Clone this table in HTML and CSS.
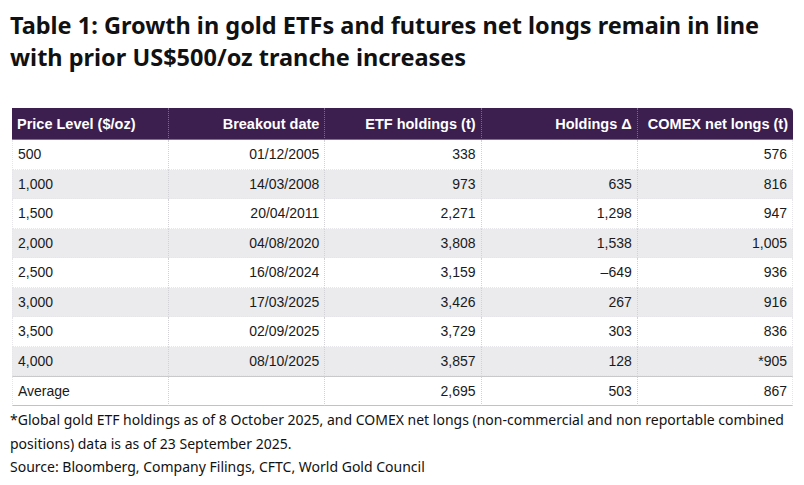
FILE: index.html
```html
<!DOCTYPE html>
<html>
<head>
<meta charset="utf-8">
<link rel="stylesheet" href="styles.css">
</head>
<body>
<h1 class="title">Table 1: Growth in gold ETFs and futures net longs remain in line with prior US$500/oz tranche increases</h1>
<table class="data">
  <thead>
    <tr>
      <th class="left">Price Level ($/oz)</th>
      <th>Breakout date</th>
      <th>ETF holdings (t)</th>
      <th>Holdings Δ</th>
      <th class="last">COMEX net longs (t)</th>
    </tr>
  </thead>
  <tbody>
    <tr><td class="left">500</td><td>01/12/2005</td><td>338</td><td></td><td>576</td></tr>
    <tr class="alt"><td class="left">1,000</td><td>14/03/2008</td><td>973</td><td>635</td><td>816</td></tr>
    <tr><td class="left">1,500</td><td>20/04/2011</td><td>2,271</td><td>1,298</td><td>947</td></tr>
    <tr class="alt"><td class="left">2,000</td><td>04/08/2020</td><td>3,808</td><td>1,538</td><td>1,005</td></tr>
    <tr><td class="left">2,500</td><td>16/08/2024</td><td>3,159</td><td>–649</td><td>936</td></tr>
    <tr class="alt"><td class="left">3,000</td><td>17/03/2025</td><td>3,426</td><td>267</td><td>916</td></tr>
    <tr><td class="left">3,500</td><td>02/09/2025</td><td>3,729</td><td>303</td><td>836</td></tr>
    <tr class="alt"><td class="left">4,000</td><td>08/10/2025</td><td>3,857</td><td>128</td><td>*905</td></tr>
    <tr class="avg"><td class="left">Average</td><td></td><td>2,695</td><td>503</td><td>867</td></tr>
  </tbody>
</table>
<p class="note">*Global gold ETF holdings as of 8 October 2025, and COMEX net longs (non-commercial and non reportable combined positions) data is as of 23 September 2025.</p>
<p class="note">Source: Bloomberg, Company Filings, CFTC, World Gold Council</p>
</body>
</html>
```

FILE: styles.css
```css
html, body {
  margin: 0;
  padding: 0;
  background: #ffffff;
}
body {
  padding: 0 10px;
  color: #111111;
}
.title {
  font-family: "Noto Sans", "Open Sans", sans-serif;
  font-weight: 700;
  font-size: 23.5px;
  line-height: 32px;
  margin: 9px 0 0 0;
  color: #111111;
}
.data {
  margin: 35px 0 0 2px;
  width: 781px;
  table-layout: fixed;
  border-collapse: separate;
  border-spacing: 0;
  font-family: "Liberation Sans", Arial, sans-serif;
  font-size: 14px;
  color: #1a1a1a;
}
.data th {
  background: #3c1f4f;
  color: #ffffff;
  font-weight: 700;
  font-size: 14.5px;
  height: 31px;
  padding: 0 5px;
  text-align: right;
  border-bottom: 1px solid #8a6a9c;
  border-left: 1px dotted #7d6590;
  white-space: nowrap;
}
.data th:first-child {
  border-left: none;
}
.data th.last {
  border-top-right-radius: 4px;
}
.data td {
  height: 28.5px;
  padding: 0 5px;
  text-align: right;
  border-left: 1px dotted #d2d2d6;
  border-bottom: 1px dotted #e6e6ea;
}
.data td:first-child {
  border-left: 1px dotted #e6e6ea;
}
.data td:last-child {
  border-right: 1px dotted #e6e6ea;
}
.data .left {
  text-align: left;
}
.data tr.alt td {
  background: #ebebee;
}
.data tr.avg td {
  border-top: 1px solid #c9c9cc;
  border-bottom: 1px solid #c2c2c6;
  height: 28px;
}
.note {
  font-family: "Noto Sans", "Open Sans", sans-serif;
  font-size: 14px;
  line-height: 23.5px;
  margin: 2px 0 0 0;
  color: #111111;
}
.note + .note {
  margin-top: 0;
}
```
